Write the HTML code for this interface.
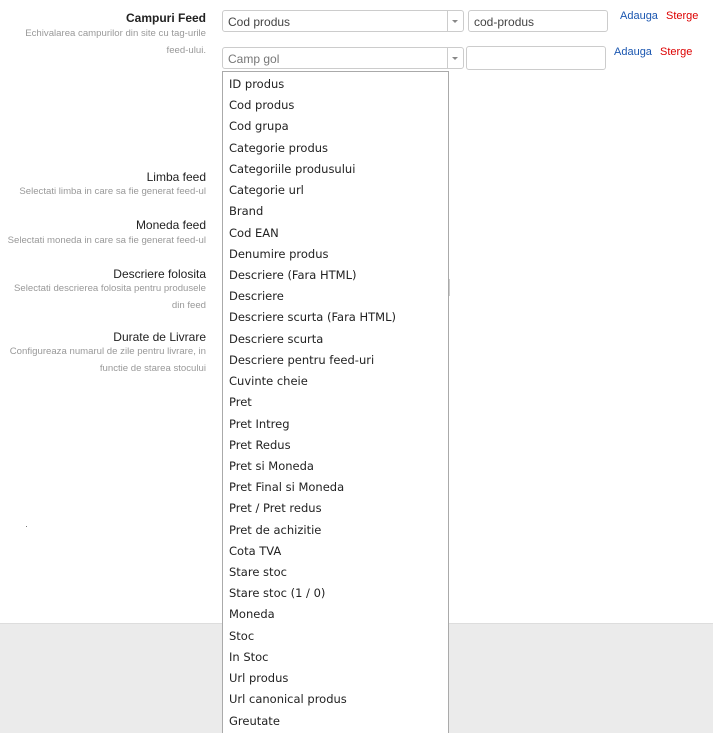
<!DOCTYPE html>
<html><head><meta charset="utf-8"><style>
html,body{margin:0;width:713px;height:733px;overflow:hidden}
body{background:#fff;font-family:"Liberation Sans",Arial,sans-serif;position:relative}
.grey{position:absolute;left:0;top:623px;width:713px;height:110px;background:#ebebeb;border-top:1px solid #ddd}
.a{position:absolute}
.lbl{position:absolute;right:507px;text-align:right;font-size:12px;color:#222;white-space:nowrap}
.desc{position:absolute;right:507px;text-align:right;font-size:9.6px;color:#999;line-height:17px;white-space:nowrap}
.box{position:absolute;border:1px solid #ccc;border-radius:3px;height:22px;box-sizing:border-box;font-size:12px;padding:4px 5px;color:#444;background:#fff}
.arr{position:absolute;right:0;top:0;width:15px;height:20px;border-left:1px solid #ccc}
.arr:after{content:"";position:absolute;left:4px;top:9px;border:3px solid transparent;border-top:3px solid #888}
.dd{position:absolute;left:222px;top:71px;width:227px;height:662px;border:1px solid #aaa;border-bottom:none;box-sizing:border-box;background:#fff;font-family:"DejaVu Sans",Verdana,sans-serif;font-size:11.5px;color:#222;overflow:hidden}
.dd div{height:21.23px;line-height:21.23px;padding-left:6px}
.lk{position:absolute;font-size:11px}
</style></head><body>
<div class="grey"></div>
<div class="lbl" style="top:11px;font-weight:bold">Campuri Feed</div>
<div class="desc" style="top:25px">Echivalarea campurilor din site cu tag-urile<br>feed-ului.</div>
<div class="box" style="left:222px;top:10px;width:242px">Cod produs<span class="arr"></span></div>
<div class="box" style="left:468px;top:10px;width:140px">cod-produs</div>
<div class="lk" style="left:620px;top:10px;color:#1a56b0">Adauga</div>
<div class="lk" style="left:666px;top:10px;color:#d00">Sterge</div>
<div class="box" style="left:222px;top:47px;width:242px;color:#777">Camp gol<span class="arr"></span></div>
<div class="box" style="left:466px;top:46px;width:140px;height:24px"></div>
<div class="lk" style="left:614px;top:46px;color:#1a56b0">Adauga</div>
<div class="lk" style="left:660px;top:46px;color:#d00">Sterge</div>
<div class="lbl" style="top:170px">Limba feed</div>
<div class="desc" style="top:183px">Selectati limba in care sa fie generat feed-ul</div>
<div class="lbl" style="top:218px">Moneda feed</div>
<div class="desc" style="top:232px">Selectati moneda in care sa fie generat feed-ul</div>
<div class="lbl" style="top:267px">Descriere folosita</div>
<div class="desc" style="top:280px">Selectati descrierea folosita pentru produsele<br>din feed</div>
<div class="lbl" style="top:330px">Durate de Livrare</div>
<div class="desc" style="top:343px">Configureaza numarul de zile pentru livrare, in<br>functie de starea stocului</div>
<div class="a" style="left:449px;top:279px;width:1px;height:17px;background:#ccc"></div>
<div class="a" style="left:26px;top:526px;width:1px;height:1px;background:#777"></div>
<div class="dd" style="padding-top:2px">
<div>ID produs</div><div>Cod produs</div><div>Cod grupa</div><div>Categorie produs</div><div>Categoriile produsului</div><div>Categorie url</div><div>Brand</div><div>Cod EAN</div><div>Denumire produs</div><div>Descriere (Fara HTML)</div><div>Descriere</div><div>Descriere scurta (Fara HTML)</div><div>Descriere scurta</div><div>Descriere pentru feed-uri</div><div>Cuvinte cheie</div><div>Pret</div><div>Pret Intreg</div><div>Pret Redus</div><div>Pret si Moneda</div><div>Pret Final si Moneda</div><div>Pret / Pret redus</div><div>Pret de achizitie</div><div>Cota TVA</div><div>Stare stoc</div><div>Stare stoc (1 / 0)</div><div>Moneda</div><div>Stoc</div><div>In Stoc</div><div>Url produs</div><div>Url canonical produs</div><div>Greutate</div>
</div>
</body></html>
